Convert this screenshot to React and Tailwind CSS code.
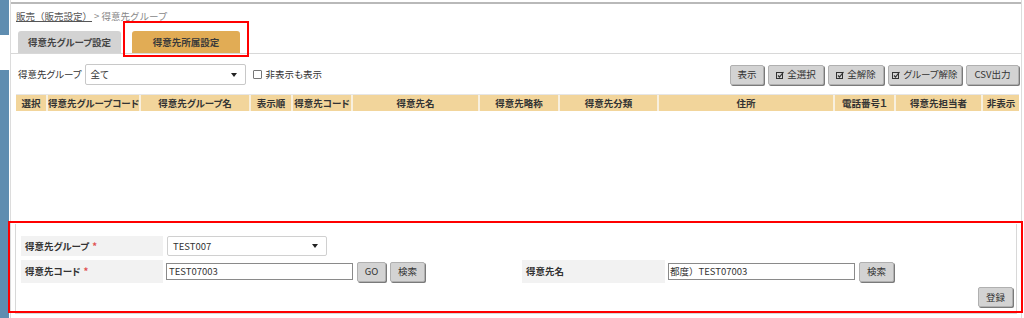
const headers = [
  { label: '選択', w: 'w-[30px]' },
  { label: '得意先グループコード', w: 'w-[93px]' },
  { label: '得意先グループ名', w: 'w-[110px]' },
  { label: '表示順', w: 'w-[42px]' },
  { label: '得意先コード', w: 'w-[60px]' },
  { label: '得意先名', w: 'w-[127px]' },
  { label: '得意先略称', w: 'w-[80px]' },
  { label: '得意先分類', w: 'w-[99px]' },
  { label: '住所', w: 'w-[176px]' },
  { label: '電話番号１', w: 'w-[61px]' },
  { label: '得意先担当者', w: 'w-[87px]' },
  { label: '非表示', w: 'flex-1' },
];

const CheckIcon = () => (
  <svg width="8" height="8" viewBox="0 0 8 8" className="mr-[3px]">
    <rect x="0.5" y="1.5" width="6" height="6" fill="none" stroke="#333" strokeWidth="1" />
    <path d="M2 4.5 L3.5 6 L7.5 1" fill="none" stroke="#333" strokeWidth="1.2" />
  </svg>
);

const Btn = ({ children, className = '' }) => (
  <button
    className={`h-[20px] flex items-center justify-center whitespace-nowrap bg-[#d3d3d3] border border-[#b0b0b0] rounded-[2px] shadow-[1px_1px_0_#7a7a7a] text-[9.5px] text-[#333] ${className}`}
  >
    {children}
  </button>
);

const Caret = () => (
  <svg width="6" height="4" viewBox="0 0 6 4" className="ml-auto mr-[8px]">
    <path d="M0 0 L6 0 L3 4 Z" fill="#222" />
  </svg>
);

export default function App() {
  return (
    <div className="relative w-[1024px] h-[318px] bg-white flex overflow-hidden font-['Meiryo_UI','Noto_Sans_CJK_JP',sans-serif] [font-feature-settings:'palt'] text-[#333]">
      {/* left strip */}
      <div className="w-[9px] shrink-0 flex flex-col">
        <div className="h-[35px] bg-[#5f8db0]" />
        <div className="h-[35px]" />
        <div className="flex-1 bg-[#5f8db0]" />
      </div>

      <div className="w-[1012px] ml-[1px] border-l border-r border-[#dcdcdc] flex flex-col">
        <div className="h-[2px] mt-[2px] bg-[#b9b9b9]" />

        {/* breadcrumb */}
        <div className="mt-[6px] pl-[5px] flex items-center text-[9.5px] h-[12px] [font-feature-settings:normal]">
          <span className="underline text-[#555]">販売（販売設定）</span>
          <span className="ml-[2px] text-[#888]">&gt; 得意先グループ</span>
        </div>

        {/* tabs */}
        <div className="mt-[9px] pl-[7px] flex gap-[11px] border-b border-[#d8d8d8] h-[23px]">
          <div className="w-[103px] h-[22px] bg-[#d3d3d3] rounded-t-[3px] flex items-center justify-center text-[9.5px] font-bold text-[#444]">
            得意先グループ設定
          </div>
          <div className="w-[108px] h-[22px] bg-[#e1ac55] rounded-t-[3px] flex items-center justify-center text-[9.5px] font-bold text-[#3a3a3a]">
            得意先所属設定
          </div>
        </div>

        {/* filter row */}
        <div className="mt-[10px] pl-[7px] pr-[2px] flex items-center h-[21px]">
          <span className="text-[9.5px] text-[#333]">得意先グループ</span>
          <div className="ml-[3px] w-[161px] h-[21px] border border-[#c8c8c8] rounded-[2px] flex items-center pl-[5px] text-[9.5px]">
            全て
            <Caret />
          </div>
          <span className="ml-[7px] w-[9px] h-[9px] border border-[#777] bg-white rounded-[1px]" />
          <span className="ml-[4px] text-[9.5px]">非表示も表示</span>
          <div className="ml-auto flex gap-[4px]">
            <Btn className="w-[34px]">表示</Btn>
            <Btn className="w-[56px]"><CheckIcon />全選択</Btn>
            <Btn className="w-[56px]"><CheckIcon />全解除</Btn>
            <Btn className="w-[74px]"><CheckIcon />グループ解除</Btn>
            <Btn className="w-[53px]">CSV出力</Btn>
          </div>
        </div>

        {/* table header */}
        <div className="mt-[9px] ml-[5px] mr-[2px] h-[17px] flex bg-[#f2d59b] border-t border-[#e6e6e6]">
          {headers.map((h, i) => (
            <div
              key={h.label}
              className={`${h.w} flex items-center justify-center whitespace-nowrap overflow-hidden text-[9.5px] font-bold text-[#333] ${i > 0 ? 'border-l-2 border-[#f8f0df]' : ''}`}
            >
              {h.label}
            </div>
          ))}
        </div>

        <div className="flex-1" />

        {/* edit panel */}
        <div className="mx-[4px] mb-[4px] h-[90px] border-l border-b border-r border-[#d8d8d8] pl-[5px] pr-[3px] pt-[12px] flex flex-col">
          <div className="flex items-center h-[20px]">
            <div className="w-[142px] h-[20px] bg-[#f2f2f2] flex items-center pl-[4px] text-[9.5px] font-bold">
              得意先グループ<span className="ml-[3px] text-[#e05050]">*</span>
            </div>
            <div className="ml-[4px] w-[160px] h-[20px] border border-[#d0d0d0] rounded-[2px] flex items-center pl-[5px] text-[9.5px]">
              TEST007
              <Caret />
            </div>
          </div>
          <div className="mt-[4px] flex items-center h-[23px]">
            <div className="w-[142px] h-[23px] bg-[#f2f2f2] flex items-center pl-[4px] text-[9.5px] font-bold">
              得意先コード<span className="ml-[3px] text-[#e05050]">*</span>
            </div>
            <div className="ml-[3px] w-[187px] h-[17px] border border-[#8a8a8a] flex items-center pl-[2px] text-[9.5px]">
              TEST07003
            </div>
            <Btn className="ml-[4px] w-[29px]">GO</Btn>
            <Btn className="ml-[4px] w-[35px]">検索</Btn>
            <div className="ml-[97px] w-[143px] h-[23px] bg-[#f2f2f2] flex items-center pl-[4px] text-[9.5px] font-bold">
              得意先名
            </div>
            <div className="ml-[3px] w-[187px] h-[17px] border border-[#8a8a8a] flex items-center pl-[1px] text-[9.5px] [font-feature-settings:normal]">
              都度）TEST07003
            </div>
            <Btn className="ml-[4px] w-[35px]">検索</Btn>
          </div>
          <div className="mt-[4px] flex justify-end">
            <Btn className="w-[35px]">登録</Btn>
          </div>
        </div>
      </div>

      {/* annotation boxes */}
      <div className="absolute left-[123px] top-[21px] w-[126px] h-[36px] border-2 border-[#ff0000]" />
      <div className="absolute left-[8px] top-[221px] w-[1015px] h-[92px] border-2 border-[#ff0000]" />
    </div>
  );
}
